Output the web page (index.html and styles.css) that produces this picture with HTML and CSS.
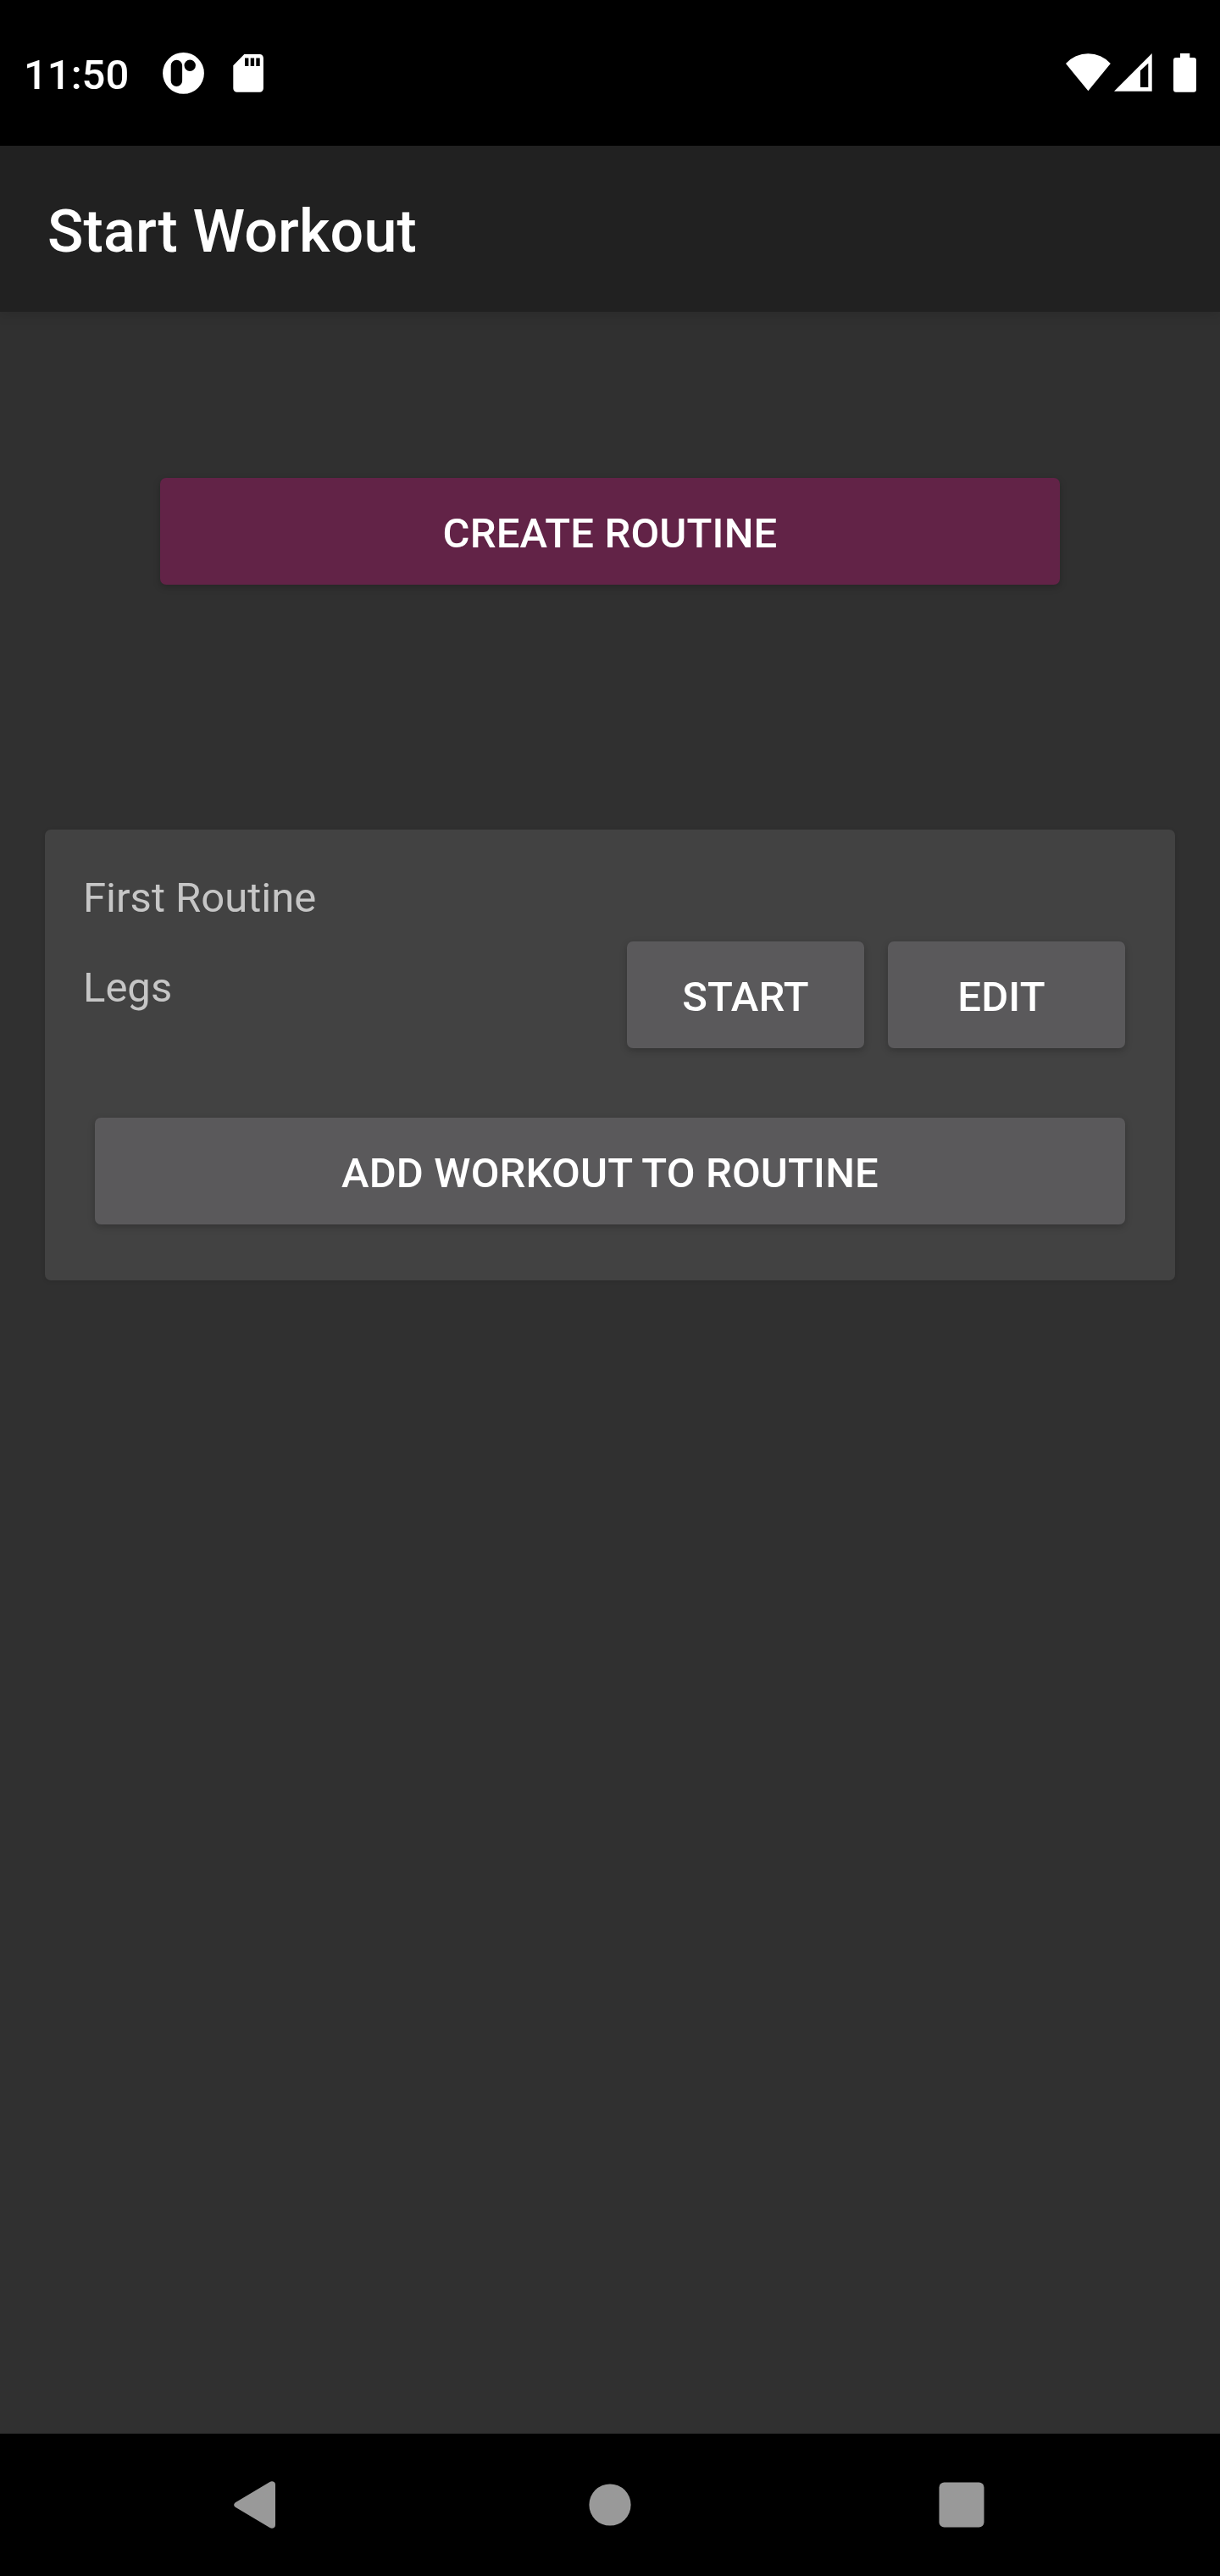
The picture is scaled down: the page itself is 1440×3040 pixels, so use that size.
FILE: index.html
```html
<!DOCTYPE html>
<html lang="en">
<head>
<meta charset="utf-8">
<title>Start Workout</title>
<link rel="stylesheet" href="styles.css">
</head>
<body>
<div class="screen">
  <div class="status-bar">
    <span class="clock">11:50</span>
    <svg class="icon-app" viewBox="0 0 49 49"><path fill="#fff" fill-rule="evenodd" d="M24.5 0a24.4 24.4 0 1 1 0 48.8a24.4 24.4 0 1 1 0-48.8zM16.4 8.8a6.7 6.7 0 0 0-6.7 6.7v17.8a6.7 6.7 0 0 0 13.4 0V15.500a6.7 6.7 0 0 0-6.7-6.700zM32.200 8.600a6.700 6.700 0 1 0 0 13.400a6.700 6.700 0 1 0 0-13.400z"/></svg>
    <svg class="icon-sd" viewBox="0 0 36 45"><path fill="#fff" fill-rule="evenodd" d="M13.300 0H31.500a4.400 4.400 0 0 1 4.400 4.400V40.300a4.400 4.400 0 0 1-4.400 4.400H4.700a4.400 4.400 0 0 1-4.400-4.400V13.200zM14 4.600v9.400h4.400V4.600zM20.700 4.600v9.400h4.400V4.600zM27.300 4.600v9.400h4.400V4.600z"/></svg>
    <span class="spacer"></span>
    <svg class="icon-wifi" viewBox="0 0 53 45"><path fill="#fff" d="M26.400 44.300L0 12A35.500 35.500 0 0 1 52.800 12z"/></svg>
    <svg class="icon-signal" viewBox="0 0 45 45"><path fill="#fff" fill-rule="evenodd" d="M0 44.800L44.700 0V44.800zM31 20.300V40h9.300V11.700z"/></svg>
    <svg class="icon-battery" viewBox="0 0 27 46"><path fill="#fff" d="M8 0h11.300v5H24a3 3 0 0 1 3 3V42.700a3 3 0 0 1-3 3H3a3 3 0 0 1-3-3V8a3 3 0 0 1 3-3h5z"/></svg>
  </div>
  <header class="app-bar"><h1 class="title">Start Workout</h1></header>
  <main class="content">
    <button class="btn btn-create">CREATE ROUTINE</button>
    <section class="card">
      <div class="routine-name">First Routine</div>
      <div class="workout-row">
        <span class="workout-name">Legs</span>
        <button class="btn btn-small">START</button>
        <button class="btn btn-small btn-edit">EDIT</button>
      </div>
      <button class="btn btn-add">ADD WORKOUT TO ROUTINE</button>
    </section>
  </main>
  <nav class="nav-bar">
    <svg class="nav-back" viewBox="0 0 50 56"><path fill="#999" d="M1.800 25.200L42.500.900Q45-.600 47.500.900Q49 2 49 4V52Q49 54 47.500 55.100Q45 56.600 42.500 55.100L1.800 30.800Q-1.600 28 1.800 25.200z"/></svg>
    <svg class="nav-home" viewBox="0 0 50 50"><circle cx="25" cy="25" r="24.600" fill="#999"/></svg>
    <svg class="nav-recent" viewBox="0 0 54 54"><rect x=".500" y=".500" width="53" height="53" rx="6" fill="#999"/></svg>
  </nav>
</div>
</body>
</html>
```
FILE: styles.css
```css
* { box-sizing: border-box; }
body { margin: 0; background: #303030; font-family: Roboto, sans-serif; }
svg { display: block; flex: none; }
.screen { width: 1440px; height: 3040px; display: flex; flex-direction: column; background: #303030; }

.status-bar { height: 172px; flex: none; display: flex; align-items: flex-start; padding: 62px 28px 0; background: #000; color: #fff; }
.clock { width: 164px; font-size: 49px; font-weight: 500; line-height: 53px; white-space: nowrap; }
.icon-app { width: 49px; height: 49px; }
.icon-sd { width: 36px; height: 45px; margin: 2px 0 0 34px; }
.spacer { flex: 1; }
.icon-wifi { width: 53px; height: 45px; margin-top: 1px; }
.icon-signal { width: 45px; height: 45px; margin: 1px 0 0 4px; }
.icon-battery { width: 27px; height: 46px; margin: 1px 0 0 25px; }

.app-bar { height: 196px; flex: none; display: flex; align-items: center; padding: 6px 56px 0; background: #212121; color: #fff; box-shadow: 0 3px 14px rgba(0, 0, 0, .12); }
.title { margin: 0; font-size: 70px; font-weight: 500; line-height: 82px; letter-spacing: .15px; }

.content { flex: 1; display: flex; flex-direction: column; padding: 196px 53px 0; }
.btn { display: block; height: 126px; flex: none; margin: 0; padding: 6px 0 0; border: 0; border-radius: 7px; background: #5a595b; color: #fff; font: 500 49px/58px Roboto, sans-serif; letter-spacing: .17px; text-align: center; white-space: nowrap; box-shadow: 0 3px 8px rgba(0, 0, 0, .22); }
.btn-create { margin: 0 136px; background: #622347; }

.card { height: 532px; margin-top: 289px; padding: 52px 59px 0 45px; border-radius: 7px; background: #424242; color: #c6c6c6; box-shadow: 0 1px 5px rgba(0, 0, 0, .12); }
.routine-name, .workout-name { font-size: 49px; line-height: 58px; }
.workout-row { display: flex; align-items: flex-start; gap: 28px; margin-top: 22px; }
.workout-name { flex: 1; padding-top: 26px; }
.btn-small { width: 280px; }
.btn-edit { padding-right: 12px; }
.btn-add { width: 1216px; margin: 82px 0 0 14px; }

.nav-bar { height: 168px; flex: none; display: flex; align-items: center; padding-left: 276px; background: #000; }
.nav-back { width: 50px; height: 56px; }
.nav-home { width: 50px; height: 50px; margin-left: 369px; }
.nav-recent { width: 54px; height: 54px; margin-left: 363px; }
```
